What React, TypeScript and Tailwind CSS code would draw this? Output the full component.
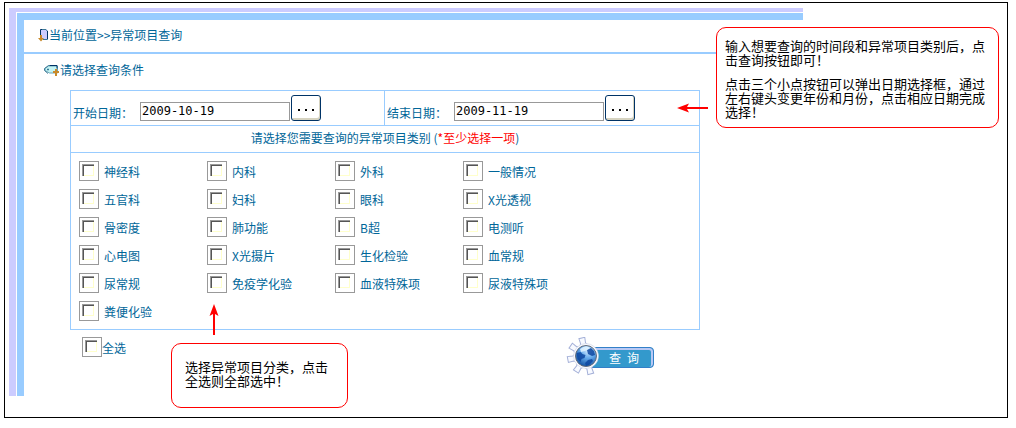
import { useState } from 'react'

const categories = [
  '神经科', '内科', '外科', '一般情况',
  '五官科', '妇科', '眼科', 'X光透视',
  '骨密度', '肺功能', 'B超', '电测听',
  '心电图', 'X光摄片', '生化检验', '血常规',
  '尿常规', '免疫学化验', '血液特殊项', '尿液特殊项',
  '粪便化验'
]

const box =
  "relative size-5 shrink-0 appearance-none border border-[#999] bg-white before:absolute before:left-[2px] before:top-[2px] before:size-3 before:border-l before:border-t before:border-[#999] before:shadow-[inset_1px_1px_0_#555,inset_-1px_-1px_0_#ffffcc] before:content-[''] checked:before:bg-[#069]"

function LocationIcon() {
  return (
    <svg width="11" height="14" viewBox="0 0 11 14" aria-hidden="true">
      <path d="M2 1h6l2 2v8H4L2 9z" fill="#ccccff" />
      <path d="M2.5 7V1.5H5" fill="none" stroke="#036" />
      <path d="M4 1.500h4l1.500 2V11.500H5" fill="none" stroke="#3b7896" />
      <path d="M9.500 3v8" stroke="#036" />
      <path d="M2 7h2v3h2l-3 3.500L0 10h2z" fill="#c98a2b" />
    </svg>
  )
}

function TagIcon() {
  return (
    <svg width="15" height="11" viewBox="0 0 15 11" aria-hidden="true">
      <path d="M4.500 1h9v7h-8L1 5.500v-2z" fill="#c4f4f4" stroke="#6aa5b8" />
      <path d="M13 .5H4.500L.5 3.500v2L4 8.500" fill="none" stroke="#3b7896" />
      <path d="M6 .5h7v3" fill="none" stroke="#036" />
      <path d="M3 4.500h2M4 3.500v2" stroke="#3b7896" />
      <path d="M11 4h2v2h2v2h-2v3h-2V8H9V6h2z" fill="#c98a2b" />
    </svg>
  )
}

function GearIcon() {
  return (
    <svg className="absolute left-0 top-0" width="34" height="39" viewBox="0 0 34 39" aria-hidden="true">
      <defs>
        <radialGradient id="ball" cx="60%" cy="25%" r="80%">
          <stop offset="0" stopColor="#d4ecff" />
          <stop offset=".45" stopColor="#62a8ea" />
          <stop offset="1" stopColor="#0b4a9c" />
        </radialGradient>
      </defs>
      <g fill="#f8faff" stroke="#a4b0d8">
        {[-13, -56, -101, -147, 165].map(a => (
          <path key={a} d="M15.500 9l2-3-.5-5.500h6l-.5 5.500 2 3z" transform={`rotate(${a} 20 19)`} />
        ))}
      </g>
      <circle cx="20" cy="19" r="12.500" fill="#f8faff" stroke="#c6cce0" strokeWidth=".5" />
      <circle cx="20" cy="19" r="10.500" fill="url(#ball)" stroke="#666c78" />
      <path d="M10.500 16l4-1 2 2 3 1-1 3-3 1-1 3-3-3zM21 13l4-2 3 3 1 4-3 1-4-2zM19 26l3-3 4-1 1 2-4 4-3 1z" fill="#0d47a0" opacity=".85" />
      <path d="M14 12q6-5 10-1l-5 3-4 1z" fill="#e4f4ff" opacity=".85" />
    </svg>
  )
}

function DateField({ id, label, value, onChange }: {
  id: string
  label: string
  value: string
  onChange: (v: string) => void
}) {
  return (
    <div className="flex h-[34px] items-end pb-1 pl-0.5">
      <label htmlFor={id} className="w-[67px] leading-4">{label}</label>
      <input
        id={id}
        value={value}
        onChange={e => onChange(e.target.value)}
        className="h-[19px] w-[150px] border border-[#999] px-px pb-0.5 font-['DejaVu_Sans_Mono',monospace] text-xs leading-4 text-black outline-none"
      />
      <button
        type="button"
        aria-label="选择日期"
        className="ml-px flex h-[26px] w-[30px] items-center justify-center gap-[5px] rounded-[3px] border border-[#036] bg-white pt-1 shadow-[inset_-1px_-2px_0_#d6d3c0]"
      >
        <span className="size-0.5 bg-black" />
        <span className="size-0.5 bg-black" />
        <span className="size-0.5 bg-black" />
      </button>
    </div>
  )
}

export default function App() {
  const [start, setStart] = useState('2009-10-19')
  const [end, setEnd] = useState('2009-11-19')
  const [selected, setSelected] = useState<string[]>([])

  const toggle = (name: string) =>
    setSelected(prev => (prev.includes(name) ? prev.filter(n => n !== name) : [...prev, name]))

  return (
    <div className="bg-white pb-2.5 pl-1 pr-2 pt-0.5 font-['Noto_Sans_CJK_SC',sans-serif] text-xs text-[#006699]">
      <div className="relative border border-black pb-[21px] pl-1 pr-[204px] pt-[5px]">
        <main className="border-l-[7px] border-t-4 border-[#ccccff] pl-px pt-px">
          <div className="border-l-[7px] border-t-[7px] border-[#99ccff]">
            <header className="flex h-[34px] items-center border-b-2 border-[#99ccff] pb-0.5 pl-3.5">
              <LocationIcon />
              <span>当前位置&gt;&gt;异常项目查询</span>
            </header>
            <form onSubmit={e => e.preventDefault()}>
              <h1 className="mb-1 flex h-8 items-center gap-px pl-5">
                <TagIcon />
                请选择查询条件
              </h1>
              <div className="ml-[46px] mr-[103px] border border-[#99ccff]">
                <div className="grid grid-cols-2 divide-x divide-[#99ccff] border-b border-[#99ccff]">
                  <DateField id="start" label="开始日期：" value={start} onChange={setStart} />
                  <DateField id="end" label="结束日期：" value={end} onChange={setEnd} />
                </div>
                <p className="border-b border-[#99ccff] pb-1.5 pt-1 text-center leading-4">
                  请选择您需要查询的异常项目类别 (<span className="text-[#ff0000]">*至少选择一项</span>)
                </p>
                <div className="grid auto-rows-[28px] grid-cols-[repeat(4,128px)] pl-2 pt-2">
                  {categories.map(name => (
                    <label key={name} className="flex h-5 items-center gap-[5px]">
                      <input type="checkbox" checked={selected.includes(name)} onChange={() => toggle(name)} className={box} />
                      <span className="pt-0.5">{name}</span>
                    </label>
                  ))}
                </div>
              </div>
              <div className="flex h-[66px] items-start justify-between pl-[58px] pr-[149px] pt-[7px]">
                <label className="flex h-5 items-center">
                  <input
                    type="checkbox"
                    checked={selected.length === categories.length}
                    onChange={e => setSelected(e.target.checked ? categories : [])}
                    className={box}
                  />
                  <span className="pt-0.5">全选</span>
                </label>
                <button type="submit" className="relative flex h-[39px] w-[88px] items-center pt-0.5">
                  <span className="ml-5 flex h-[21px] flex-1 items-center justify-center gap-1.5 rounded border border-[#3380c8] bg-[#3399cc] pl-2 text-white shadow-[inset_-1px_1px_0_1px_#b8c8f4]">
                    <span>查</span>
                    <span>询</span>
                  </span>
                  <GearIcon />
                </button>
              </div>
            </form>
          </div>
        </main>

        <aside className="absolute right-2 top-6 w-[283px] rounded-[10px] border border-[#ff0000] bg-white pb-2 pl-2 pr-2 pt-[11px] text-[13px] leading-[14px] text-black">
          <p className="mb-2.5">输入想要查询的时间段和异常项目类别后，点击查询按钮即可！</p>
          <p>点击三个小点按钮可以弹出日期选择框，通过左右键头变更年份和月份，点击相应日期完成选择！</p>
          <svg className="absolute -left-10 top-[75px]" width="31" height="10" viewBox="0 0 31 10" aria-hidden="true">
            <path d="M0 5l12-4.500L10 4h21v2H10l2 3.500z" fill="#f00" />
          </svg>
        </aside>

        <aside className="absolute left-[166px] top-[340px] w-[177px] rounded-[10px] border border-[#ff0000] bg-white pb-[19px] pl-[13px] pr-4 pt-4 text-[13px] leading-[14px] text-black">
          <p>选择异常项目分类，点击全选则全部选中！</p>
          <svg className="absolute -top-10 left-[37px]" width="10" height="31" viewBox="0 0 10 31" aria-hidden="true">
            <path d="M5 0l4.500 12L6 10v21H4V10L.5 12z" fill="#f00" />
          </svg>
        </aside>
      </div>
    </div>
  )
}
